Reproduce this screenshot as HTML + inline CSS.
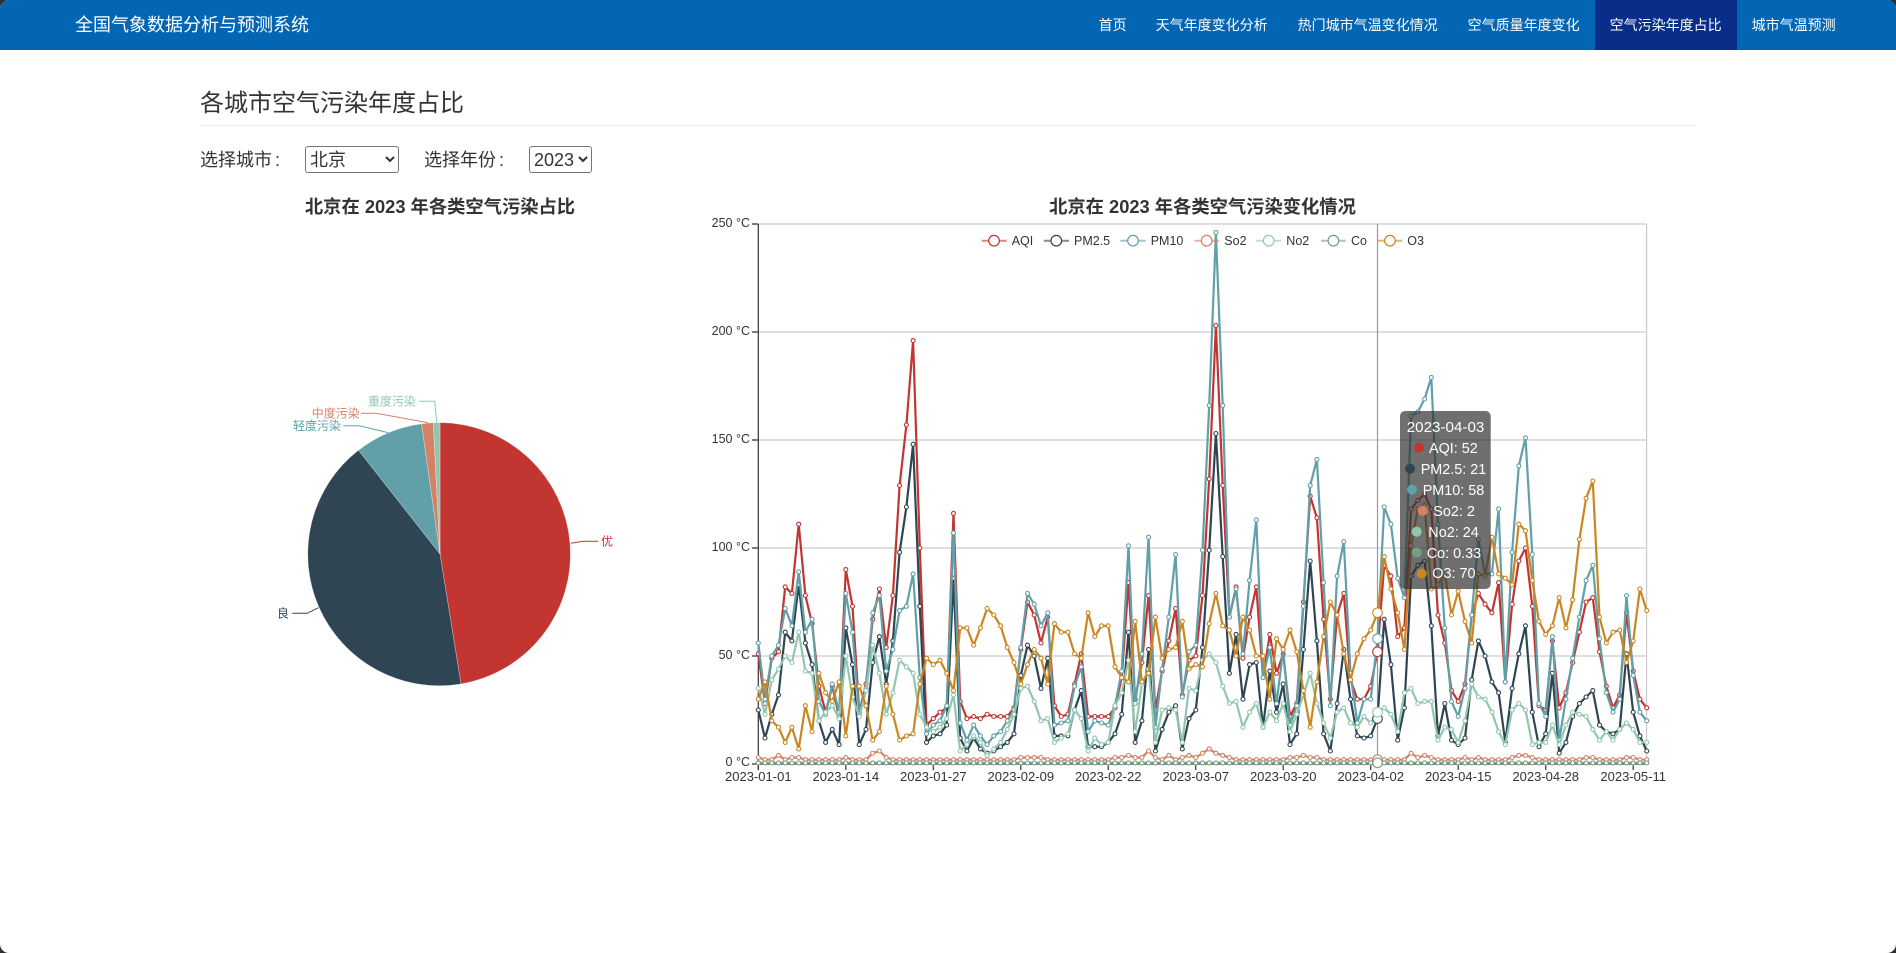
<!DOCTYPE html>
<html lang="zh-CN">
<head>
<meta charset="utf-8">
<title>各城市空气污染年度占比</title>
<style>
html,body{margin:0;padding:0;width:1896px;height:953px;overflow:hidden;background:#2e2e2e;}
body{font-family:"Liberation Sans","Noto Sans CJK SC",sans-serif;color:#333;}
#w{position:relative;width:1896px;height:953px;background:#fff;border-radius:9px;overflow:hidden;}
#nav{position:absolute;left:0;top:0;width:1896px;height:50px;background:#0366b4;}
#nav div{position:absolute;top:0;height:50px;line-height:50px;font-size:14px;color:#fff;white-space:nowrap;text-align:center;}
#brand{left:75px;font-size:18px !important;}
#nav .a{background:#082e8a;}
#h{position:absolute;left:200px;top:87px;font-size:24px;line-height:34px;color:#333;white-space:nowrap;}
#r{position:absolute;left:200px;top:125px;width:1496px;height:1px;background:#eee;}
.l{position:absolute;top:147px;line-height:27px;font-size:18px;color:#333;white-space:nowrap;}
.l span{margin-left:3px;}
select{position:absolute;top:146px;height:27px;box-sizing:border-box;font-size:18px;font-family:"Liberation Sans","Noto Sans CJK SC",sans-serif;color:#333;background:#fff;border:1px solid #767676;border-radius:3px;padding:0;margin:0;}
svg{position:absolute;left:0;top:0;}
svg text{font-family:"Liberation Sans","Noto Sans CJK SC",sans-serif;}
</style>
</head>
<body>
<div id="w">
<div id="nav">
<div id="brand">全国气象数据分析与预测系统</div>
<div style="left:1083.6px;width:58px">首页</div>
<div style="left:1140.6px;width:142px;">天气年度变化分析</div>
<div style="left:1282.6px;width:170px">热门城市气温变化情况</div>
<div style="left:1452.6px;width:142px">空气质量年度变化</div>
<div class="a" style="left:1594.6px;width:142px">空气污染年度占比</div>
<div style="left:1736.6px;width:114px">城市气温预测</div>
</div>
<div id="h">各城市空气污染年度占比</div>
<div id="r"></div>
<div class="l" style="left:200px">选择城市<span>:</span></div>
<select style="left:305px;width:94px"><option>北京</option></select>
<div class="l" style="left:424px">选择年份<span>:</span></div>
<select style="left:529px;width:63px"><option>2023</option></select>

<svg width="1896" height="953" viewBox="0 0 1896 953" xmlns="http://www.w3.org/2000/svg">
<text x="440" y="213" text-anchor="middle" font-size="18.3" font-weight="bold" fill="#333">北京在 2023 年各类空气污染占比</text>
<text x="1202.5" y="213" text-anchor="middle" font-size="18.3" font-weight="bold" fill="#333">北京在 2023 年各类空气污染变化情况</text>

<!-- pie -->
<g stroke="#fff" stroke-width=".5" stroke-opacity=".6">
<path d="M440 554L440 422.5A131.7 131.7 0 0 1 461 684Z" fill="#c23531"/>
<path d="M440 554L461 684A131.7 131.7 0 0 1 358.5 450.2Z" fill="#2f4554"/>
<path d="M440 554L358.5 450.2A131.7 131.7 0 0 1 421.5 423.8Z" fill="#61a0a8"/>
<path d="M440 554L421.5 423.8A131.7 131.7 0 0 1 433.3 422.7Z" fill="#d48265"/>
<path d="M440 554L433.3 422.7A131.7 131.7 0 0 1 440 422.5Z" fill="#91c7ae"/>
</g>
<g fill="none" stroke-width="1">
<path d="M571 543.3L582.7 541.3L598.3 541.3" stroke="#c23531"/>
<path d="M318.3 607.7L307.3 613.3L292.3 613.3" stroke="#2f4554"/>
<path d="M388.3 432.7L359.3 425.7L343.3 425.7" stroke="#61a0a8"/>
<path d="M428.3 422.7L376.3 413.3L361 413.3" stroke="#d48265"/>
<path d="M436.7 422.3L434.7 401.3L419.3 401.3" stroke="#91c7ae"/>
</g>
<g font-size="12">
<text x="601" y="545.5" fill="#c23531">优</text>
<text x="277" y="617.5" fill="#2f4554">良</text>
<text x="293" y="430" fill="#61a0a8">轻度污染</text>
<text x="311.7" y="417.5" fill="#d48265">中度污染</text>
<text x="368" y="405.5" fill="#91c7ae">重度污染</text>
</g>

<!-- grid -->
<g stroke="#ccc" stroke-width="1.2" fill="none">
<path d="M758 224H1646.6M758 332H1646.6M758 440H1646.6M758 548H1646.6M758 656H1646.6M1646.6 224V764"/>
</g>
<g stroke="#333" stroke-width="1.2" fill="none">
<path d="M758.3 224V770M752 224H758M752 332H758M752 440H758M752 548H758M752 656H758M752 764H1646.6"/>
<path d="M758.3 764v6M845.8 764v6M933.3 764v6M1020.8 764v6M1108.2 764v6M1195.7 764v6M1283.2 764v6M1370.7 764v6M1458.2 764v6M1545.7 764v6M1633.2 764v6"/>
</g>
<g font-size="12.5" fill="#333" text-anchor="end">
<text x="750" y="227">250 °C</text>
<text x="750" y="335">200 °C</text>
<text x="750" y="443">150 °C</text>
<text x="750" y="551">100 °C</text>
<text x="750" y="659">50 °C</text>
<text x="750" y="766">0 °C</text>
</g>
<g font-size="13" fill="#333" text-anchor="middle">
<text x="758.3" y="781">2023-01-01</text>
<text x="845.8" y="781">2023-01-14</text>
<text x="933.3" y="781">2023-01-27</text>
<text x="1020.8" y="781">2023-02-09</text>
<text x="1108.2" y="781">2023-02-22</text>
<text x="1195.7" y="781">2023-03-07</text>
<text x="1283.2" y="781">2023-03-20</text>
<text x="1370.7" y="781">2023-04-02</text>
<text x="1458.2" y="781">2023-04-15</text>
<text x="1545.7" y="781">2023-04-28</text>
<text x="1633.2" y="781">2023-05-11</text>
</g>
<path d="M1377.5 224V764" stroke="#999" stroke-width="1.2" fill="none"/>

<g id="series"></g>
<g id="hover"></g>

<!-- legend -->
<g fill="#fff" stroke-width="1.2">
<g stroke-opacity=".6" stroke-width="2" fill="none">
<path d="M981.7 240.7h25" stroke="#c23531"/>
<path d="M1043.7 240.7h25.3" stroke="#2f4554"/>
<path d="M1120.3 240.7h25.4" stroke="#61a0a8"/>
<path d="M1194.3 240.7h24.7" stroke="#d48265"/>
<path d="M1256.3 240.7h24.7" stroke="#91c7ae"/>
<path d="M1321 240.7h24.7" stroke="#749f83"/>
<path d="M1377.7 240.7h24.6" stroke="#ca8622"/>
</g>
<circle cx="994" cy="240.7" r="5.3" stroke="#c23531"/>
<circle cx="1056.3" cy="240.7" r="5.3" stroke="#2f4554"/>
<circle cx="1133" cy="240.7" r="5.3" stroke="#61a0a8"/>
<circle cx="1206.7" cy="240.7" r="5.3" stroke="#d48265"/>
<circle cx="1268.7" cy="240.7" r="5.3" stroke="#91c7ae"/>
<circle cx="1333.4" cy="240.7" r="5.3" stroke="#749f83"/>
<circle cx="1390" cy="240.7" r="5.3" stroke="#ca8622"/>
</g>
<g font-size="12.5" fill="#333">
<text x="1011.7" y="245">AQI</text>
<text x="1074" y="245">PM2.5</text>
<text x="1150.7" y="245">PM10</text>
<text x="1224.3" y="245">So2</text>
<text x="1286.3" y="245">No2</text>
<text x="1351" y="245">Co</text>
<text x="1407.3" y="245">O3</text>
</g>

<!-- tooltip -->
<rect x="1400" y="411" width="90.7" height="178" rx="5" fill="#323232" fill-opacity=".7"/>
<g fill="#fff" font-size="14.4">
<text x="1406.7" y="432" font-size="15.2">2023-04-03</text>
<text x="1429" y="453">AQI: 52</text>
<text x="1420.7" y="474">PM2.5: 21</text>
<text x="1422.7" y="495">PM10: 58</text>
<text x="1433.3" y="516">So2: 2</text>
<text x="1428.3" y="537">No2: 24</text>
<text x="1426.7" y="558">Co: 0.33</text>
<text x="1432.3" y="578">O3: 70</text>
</g>
<circle cx="1419" cy="447.7" r="5" fill="#c23531"/>
<circle cx="1410" cy="468.7" r="5" fill="#2f4554"/>
<circle cx="1412" cy="489.7" r="5" fill="#61a0a8"/>
<circle cx="1422.7" cy="510.7" r="5" fill="#d48265"/>
<circle cx="1416.7" cy="531.7" r="5" fill="#91c7ae"/>
<circle cx="1416.7" cy="552.5" r="5" fill="#749f83"/>
<circle cx="1421.7" cy="573.5" r="5" fill="#ca8622"/>
</svg>
</div>
<script>
(function(){
var aqi=[51,28,49,52,82,79,111,78,65,36,24,36,22,90,73,24,37,67,81,54,78,129,157,196,100,18,21,24,26,116,29,21,22,21,23,22,22,22,26,53,75,69,56,68,27,22,23,37,51,22,22,22,22,26,40,84,30,47,78,25,43,57,72,32,48,50,78,132,203,129,68,82,49,68,82,40,60,42,51,22,28,75,124,114,67,30,69,79,39,30,30,36,52,92,87,59,63,118,122,125,118,69,56,34,29,37,69,79,74,70,84,38,74,94,100,73,27,25,57,26,33,47,61,75,77,52,36,26,32,70,43,30,26];
var pm25=[25,12,23,32,61,57,83,56,46,20,10,16,9,63,46,9,16,47,59,37,57,98,119,148,73,10,13,14,18,86,12,6,12,7,5,6,8,10,14,41,55,50,35,49,13,13,13,25,34,8,8,8,10,14,23,61,10,20,53,6,16,24,27,7,21,25,54,99,153,96,42,60,30,46,47,17,43,24,37,9,14,53,94,57,14,6,28,53,30,13,12,13,21,67,46,11,26,87,92,94,64,13,28,11,9,12,39,57,50,38,33,10,35,51,64,24,8,14,42,5,10,22,28,31,34,18,15,14,16,51,24,13,6];
var pm10=[56,30,50,55,72,64,89,61,67,29,23,37,24,79,61,23,35,70,78,43,53,71,73,88,40,14,18,20,27,107,19,11,18,13,9,13,15,20,25,54,79,74,64,70,18,19,20,36,45,15,20,19,18,27,43,101,28,51,105,17,44,68,97,31,52,55,99,166,246,166,68,81,51,85,113,40,54,28,53,18,27,73,129,141,84,27,87,103,42,19,30,30,58,119,111,86,77,161,163,169,179,111,63,29,22,35,69,104,88,88,118,38,98,138,151,97,28,22,59,11,30,49,68,85,92,58,33,24,30,78,41,24,20];
var no2=[35,23,39,44,50,47,61,43,42,20,24,27,21,50,31,22,34,55,42,23,33,48,45,42,23,17,15,17,21,32,6,9,13,10,4,7,10,16,23,35,36,29,20,21,10,12,14,25,21,6,12,9,10,27,33,48,15,37,44,10,25,26,25,10,35,34,48,51,47,36,28,29,17,24,28,17,24,20,28,15,23,32,42,28,19,12,24,26,19,17,22,19,24,26,23,15,33,35,28,29,29,11,17,16,10,20,37,31,30,24,15,9,25,28,25,9,10,10,18,9,18,24,23,22,16,11,15,11,16,19,16,10,10];
var o3=[30,38,20,17,10,17,7,27,15,42,33,29,38,13,36,36,27,11,15,36,23,11,13,14,37,49,46,48,42,34,63,63,55,63,72,69,64,54,47,37,46,53,49,37,65,61,61,51,49,70,59,64,64,45,40,38,66,38,42,68,49,53,54,66,44,46,45,65,79,64,62,50,68,62,50,50,30,58,53,62,52,34,17,38,59,75,69,51,39,51,58,62,70,96,81,70,53,101,118,120,81,83,88,69,80,66,56,88,87,105,88,86,83,111,108,85,66,60,64,77,63,76,104,123,131,68,56,61,62,47,57,81,71];
var so2=[],co=[],i;
for(i=0;i<133;i++){so2.push(2);co.push(0.5);}
var o={0:3,3:4,5:3,6:3,13:3,17:5,18:6,19:3,39:3,40:3,41:3,42:3,53:3,54:3,55:4,56:3,57:3,58:6,59:3,61:4,63:3,64:4,65:3,66:5,67:7,68:5,69:4,70:3,79:3,80:3,81:4,82:3,83:3,97:5,98:3,99:4,100:3,105:3,107:3,112:3,113:4,114:4,115:3,123:3,124:3,129:3,130:3};
for(i in o)so2[i]=o[i];
var s=[[aqi,'#c23531'],[pm25,'#2f4554'],[pm10,'#61a0a8'],[so2,'#d48265'],[no2,'#91c7ae'],[co,'#749f83'],[o3,'#ca8622']];
function X(k){return 758.3+6.73*k}
function Y(v){return 764-2.16*v}
var h='',hv='';
s.forEach(function(a){
 var d=a[0],c=a[1],p=[],cs='';
 d.forEach(function(v,k){
  var x=X(k).toFixed(1),y=Y(v).toFixed(1);
  p.push(x+','+y);
  if(k!=92)cs+='<circle cx="'+x+'" cy="'+y+'" r="2" fill="#fff" stroke="'+c+'" stroke-width="1.1"/>';
 });
 h+='<polyline points="'+p.join(' ')+'" fill="none" stroke="'+c+'" stroke-width="2.2" stroke-linejoin="bevel"/>'+cs;
 hv+='<circle cx="'+X(92).toFixed(1)+'" cy="'+Y(d[92]).toFixed(1)+'" r="4.8" fill="#fff" stroke="'+c+'" stroke-width="1.1"/>';
});
document.getElementById('series').innerHTML=h;
document.getElementById('hover').innerHTML=hv;
})();
</script>
</body>
</html>
